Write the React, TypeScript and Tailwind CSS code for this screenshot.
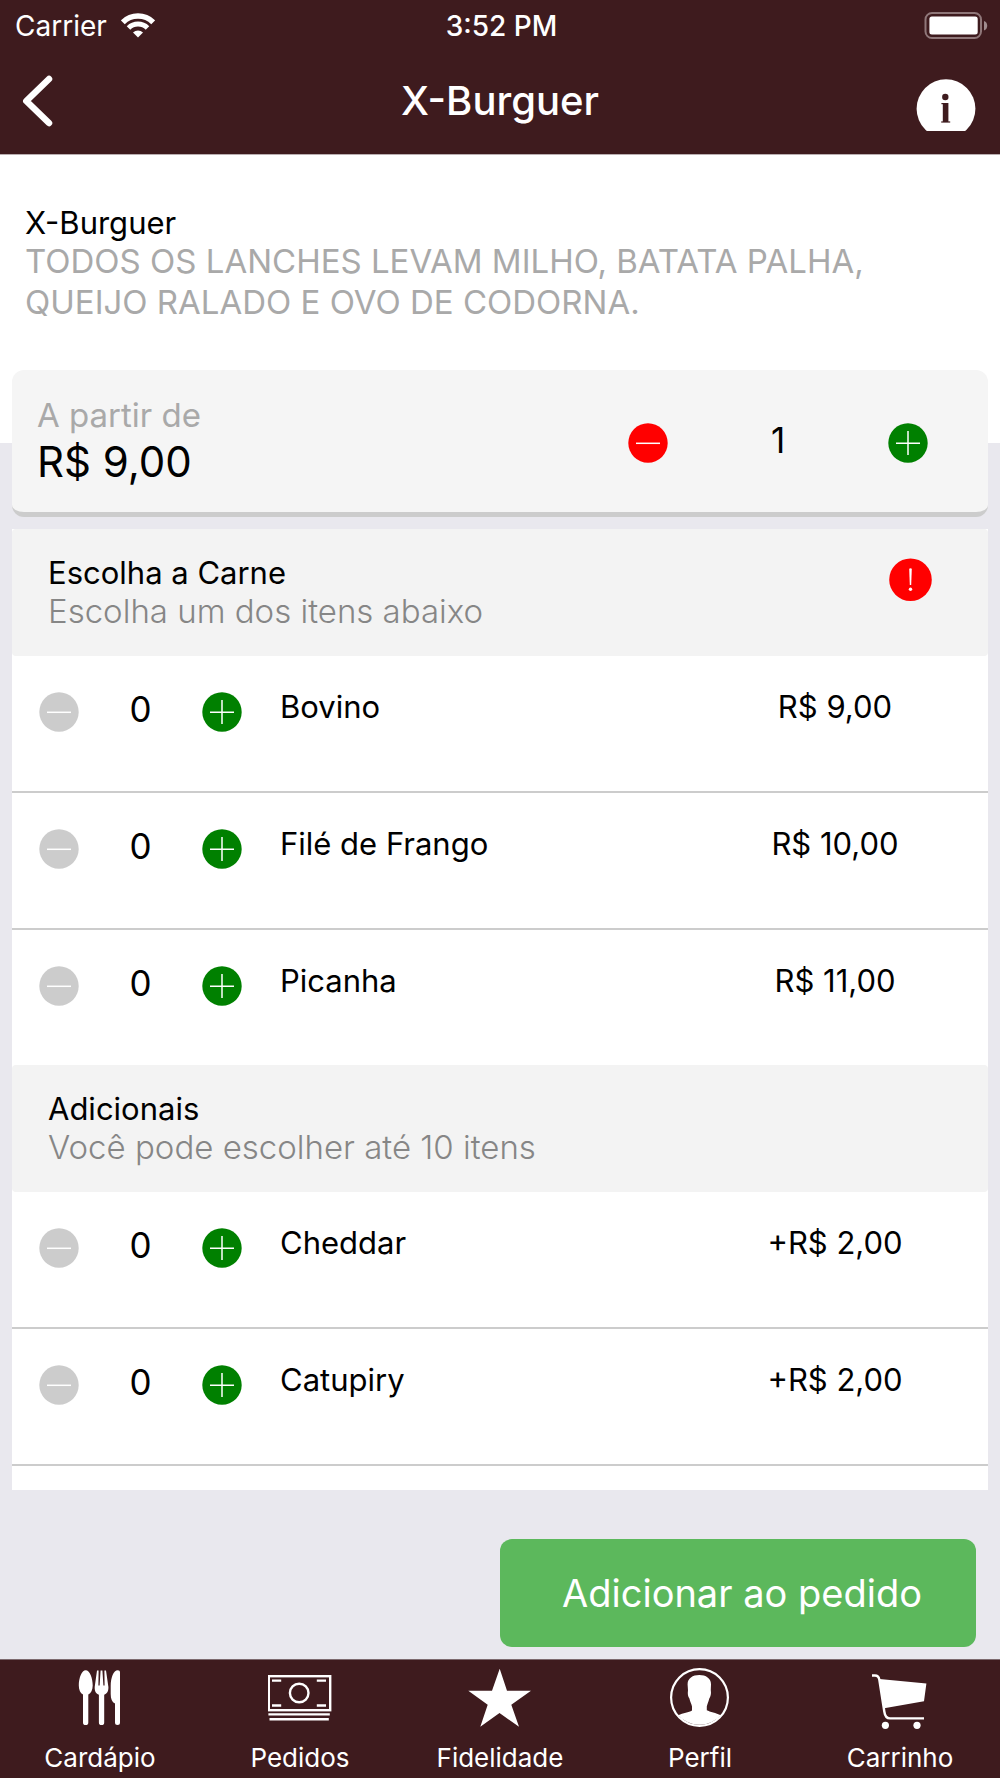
import { useState, type ReactNode } from "react";

type Item = { name: string; price: string };

const meats: Item[] = [
  { name: "Bovino", price: "R$ 9,00" },
  { name: "Filé de Frango", price: "R$ 10,00" },
  { name: "Picanha", price: "R$ 11,00" },
];

const extras: Item[] = [
  { name: "Cheddar", price: "+R$ 2,00" },
  { name: "Catupiry", price: "+R$ 2,00" },
];

function Stepper({
  label,
  start,
  min,
  className,
}: {
  label: string;
  start: number;
  min: number;
  className: string;
}) {
  const [count, setCount] = useState(start);
  const off = count === 0;
  return (
    <div className={`flex shrink-0 items-start justify-between ${className}`}>
      <button
        type="button"
        aria-label={`Remover ${label}`}
        onClick={() => setCount(Math.max(min, count - 1))}
        className="mt-[3px] block"
      >
        <svg width="40" height="40" viewBox="0 0 40 40" fill="none">
          <circle cx="20" cy="20" r="19.7" fill={off ? "#cccccc" : "#ff0000"} />
          <path d="M8 20.3H32" stroke="#fff" strokeWidth="1.5" />
        </svg>
      </button>
      <span className="text-[35px] leading-10">{count}</span>
      <button
        type="button"
        aria-label={`Adicionar ${label}`}
        onClick={() => setCount(count + 1)}
        className="mt-[3px] block"
      >
        <svg width="40" height="40" viewBox="0 0 40 40" fill="none">
          <circle cx="20" cy="20" r="19.7" fill="#008000" />
          <path d="M8 20.3H32M20 8V32" stroke="#fff" strokeWidth="1.5" />
        </svg>
      </button>
    </div>
  );
}

function SectionHeader({ title, hint, children }: { title: string; hint: string; children?: ReactNode }) {
  return (
    <header className="flex items-start justify-between rounded bg-[#f3f3f3] pt-[26px] pr-14 pb-[25px] pl-9">
      <div>
        <h2 className="text-[31px] leading-9">{title}</h2>
        <p className="text-[33px] leading-10 font-light text-[#868686]">{hint}</p>
      </div>
      {children}
    </header>
  );
}

function ItemRow({ item, line }: { item: Item; line: boolean }) {
  return (
    <li
      className={`flex items-start pt-[33px] pl-[27px] ${
        line ? "h-[137px] border-b-2 border-[#cccccc]" : "h-[135px]"
      }`}
    >
      <Stepper label={item.name} start={0} min={0} className="w-[203px]" />
      <span className="ml-[38px] flex-1 text-[31px] leading-9">{item.name}</span>
      <span className="w-[306px] text-center text-[31px] leading-9">{item.price}</span>
    </li>
  );
}

function WifiIcon() {
  return (
    <svg width="34" height="25" viewBox="0 0 34 25" fill="none" stroke="#fff">
      <path d="M1.8 9.3A21.5 21.5 0 0 1 32.2 9.3" strokeWidth="5.5" />
      <path d="M7.5 15A13.5 13.5 0 0 1 26.5 15" strokeWidth="5" />
      <path d="M12 19.5A7.2 7.2 0 0 1 22 19.5L17 24.5Z" fill="#fff" stroke="none" />
    </svg>
  );
}

function BatteryIcon() {
  return (
    <svg width="64" height="28" viewBox="0 0 64 28" fill="none">
      <rect x="1.5" y="1" width="55.5" height="25" rx="6.5" stroke="#8f7779" strokeWidth="2" />
      <rect x="5.4" y="4.6" width="48.3" height="18" rx="2.5" fill="#fff" />
      <path d="M60 9C64.3 10.3 64.3 17.3 60 18.6Z" fill="#a08c8e" />
    </svg>
  );
}

function CutleryIcon() {
  return (
    <svg width="64" height="64" viewBox="0 0 64 64" fill="#fff">
      <path d="M17.7 5.3C21.6 5.3 24.7 13 24.7 20.5C24.7 25 23 28.2 20.3 29.6V57.4A2.65 2.65 0 0 1 15 57.4V29.6C12.4 28.2 10.8 25 10.8 20.5C10.8 13 13.8 5.3 17.7 5.3Z" />
      <path d="M29 5.5H30.6L30.4 20.5H31.6L32.6 5.5H34.4L35.4 20.5H36.6L36.4 5.5H38L40.4 22C40.6 26.5 38.8 28.8 36.2 29.8V57.4A2.65 2.65 0 0 1 30.9 57.4V29.8C28.2 28.8 26.5 26.5 26.7 22Z" />
      <path d="M49.8 5.3C51.3 5.3 52 6 52 7.5V57.4A2.5 2.5 0 0 1 47 57.4V38.6C44 37 42.7 34 42.7 29V21C42.7 13 45.5 5.3 49.8 5.3Z" />
    </svg>
  );
}

function CashIcon() {
  return (
    <svg width="64" height="64" viewBox="0 0 64 64" fill="none" stroke="#fff" strokeWidth="2.4">
      <rect x="0.8" y="11.2" width="61.4" height="34" />
      <circle cx="31.2" cy="28" r="9.3" />
      <path d="M4 15.6H13.2M48.8 15.6H58M4 40.5H13.2M48.8 40.5H58" />
      <path d="M0.4 49.4H61.8M1.5 54.3H60.8" />
    </svg>
  );
}

function StarIcon() {
  return (
    <svg width="64" height="64" viewBox="0 0 64 64" fill="#fff">
      <path d="M31.7 3.7L39 25.7H63L43.3 39.7L51 61.7L31.5 48L12.3 61.7L19.7 39.7L0.3 25.7H24Z" />
    </svg>
  );
}

function PersonIcon() {
  return (
    <svg width="64" height="64" viewBox="0 0 64 64" fill="none">
      <circle cx="31.5" cy="32.5" r="28.4" stroke="#fff" strokeWidth="2.2" />
      <path
        d="M31.3 10C38 10 43.2 13.5 43 19.5C43 22 42.6 24 42.9 26.5C43.2 29 42.6 31.5 41.3 33.5C40.4 37 39.2 39.5 38.8 41.5V45.3C42 47 48 48 52.8 50.2A28.3 28.3 0 0 1 10.3 50.2C15 48 21 47.4 24 45.5V41.5C23.6 39 22.2 37 21.4 33.5C20 31.5 19.6 29 19.9 26.5C20.2 24 19.6 22 19.6 19.5C19.4 13.5 24.6 10 31.3 10Z"
        fill="#fff"
      />
    </svg>
  );
}

function CartIcon() {
  return (
    <svg width="64" height="64" viewBox="0 0 64 64" fill="none">
      <path
        d="M4 10.5H7C9.5 10.5 10.8 11.8 11.3 14.5L16.3 46.5C16.9 51 18.5 53.4 22 53.4H56"
        stroke="#fff"
        strokeWidth="2.4"
      />
      <path d="M11.5 14L58.4 18.6L56 36.3L17.6 43L16 43.5Z" fill="#fff" />
      <circle cx="17.4" cy="60.3" r="3.6" fill="#fff" />
      <circle cx="49" cy="60.3" r="3.6" fill="#fff" />
    </svg>
  );
}

const tabs = [
  { label: "Cardápio", icon: <CutleryIcon /> },
  { label: "Pedidos", icon: <CashIcon /> },
  { label: "Fidelidade", icon: <StarIcon /> },
  { label: "Perfil", icon: <PersonIcon /> },
  { label: "Carrinho", icon: <CartIcon /> },
];

export default function App() {
  return (
    <div className="flex min-h-screen flex-col bg-[#e9e8ee] font-['Inter','Liberation_Sans',sans-serif] text-black">
      <header className="border-b border-[#b9aeb0] bg-[#3e1b1e] text-white">
        <div className="grid h-[51px] grid-cols-3 items-center pr-3 pl-[15px]">
          <div className="flex items-center gap-3.5">
            <span className="text-[28px] leading-9">Carrier</span>
            <WifiIcon />
          </div>
          <span className="text-center text-[28px] leading-9 font-medium">3:52 PM</span>
          <div className="flex justify-end">
            <BatteryIcon />
          </div>
        </div>
        <div className="grid h-[103px] grid-cols-[1fr_auto_1fr] items-center px-5 pb-1">
          <button type="button" aria-label="Voltar" className="justify-self-start">
            <svg width="36" height="54" viewBox="0 0 36 54" fill="none">
              <path
                d="M29 5L6.3 27L29 49"
                stroke="#fff"
                strokeWidth="6.5"
                strokeLinecap="round"
                strokeLinejoin="round"
              />
            </svg>
          </button>
          <h1 className="text-[40px] leading-[48px] font-medium">X-Burguer</h1>
          <button
            type="button"
            aria-label="Informações"
            className="mr-1 mb-[19px] h-[52px] self-end justify-self-end overflow-hidden"
          >
            <svg width="60" height="60" viewBox="0 0 60 60">
              <circle cx="30" cy="29.7" r="29.4" fill="#fff" />
              <g fill="#3e1b1e">
                <circle cx="29.3" cy="18" r="3.2" />
                <rect x="26.8" y="24" width="5.6" height="19" />
                <rect x="25.4" y="24" width="4" height="1.2" />
                <rect x="25.2" y="42.4" width="9" height="1.2" />
              </g>
            </svg>
          </button>
        </div>
      </header>

      <section className="bg-white pt-[50px] pr-16 pb-[120px] pl-[25px]">
        <h2 className="text-[31px] leading-9">X-Burguer</h2>
        <p className="text-[33px] leading-[41px] text-[#a9a9a9]">
          TODOS OS LANCHES LEVAM MILHO, BATATA PALHA, QUEIJO RALADO E OVO DE CODORNA.
        </p>
      </section>

      <section className="relative mx-3 -mt-[73px] flex items-start justify-between rounded-xl border-b-5 border-[#cccccc] bg-[#f5f5f5] pr-[60px] pb-[23px] pl-[25px]">
        <div className="pt-[25px]">
          <p className="text-[33px] leading-10 text-[#a9a9a9]">A partir de</p>
          <p className="text-[42px] leading-[54px]">R$ 9,00</p>
        </div>
        <div className="pt-[50px]">
          <Stepper label="X-Burguer" start={1} min={1} className="w-[300px]" />
        </div>
      </section>

      <main className="mx-3 mt-3 bg-white">
        <SectionHeader title="Escolha a Carne" hint="Escolha um dos itens abaixo">
          <svg width="43" height="43" viewBox="0 0 43 43" className="mt-[3px]">
            <circle cx="21.5" cy="21.7" r="21.3" fill="#ff0000" />
            <path d="M20.2 10.8Q21.5 9.6 22.8 10.8L22.2 27H20.8Z" fill="#fff" />
            <circle cx="21.5" cy="31.2" r="1.7" fill="#fff" />
          </svg>
        </SectionHeader>
        <ul>
          {meats.map((item, i) => (
            <ItemRow key={item.name} item={item} line={i < meats.length - 1} />
          ))}
        </ul>
        <SectionHeader title="Adicionais" hint="Você pode escolher até 10 itens" />
        <ul className="pb-6">
          {extras.map((item) => (
            <ItemRow key={item.name} item={item} line />
          ))}
        </ul>
      </main>

      <div className="mt-auto flex justify-end pr-6 pb-3">
        <button
          type="button"
          className="h-[108px] w-1/2 max-w-[476px] rounded-xl bg-[#5cb85c] pl-2 text-[38px] leading-[48px] text-white"
        >
          Adicionar ao pedido
        </button>
      </div>

      <nav className="grid grid-cols-5 border-t border-[#7d6a6e] bg-[#3e1b1e] pt-[5px] pb-0.5 text-white">
        {tabs.map((tab) => (
          <a key={tab.label} href="#" className="flex flex-col items-center gap-[11px]">
            {tab.icon}
            <span className="text-[26px] leading-9">{tab.label}</span>
          </a>
        ))}
      </nav>
    </div>
  );
}
